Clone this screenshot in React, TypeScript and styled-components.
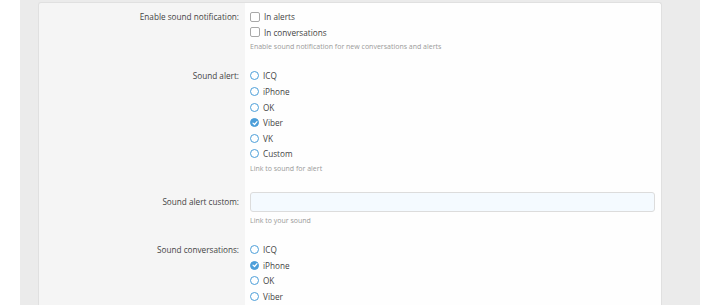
import styled, { createGlobalStyle } from 'styled-components'

const GlobalStyle = createGlobalStyle`
  html, body {
    margin: 0;
    padding: 0;
    background: #ffffff;
  }
  body {
    font-family: "Open Sans", "Noto Sans", sans-serif;
    color: #3c3c3c;
  }
`

const Page = styled.div`
  width: 680px;
  height: 305px;
  margin-left: 20px;
  padding: 2px 38px 0 18px;
  box-sizing: border-box;
  background: #ebebeb;
  overflow: hidden;
`

const Panel = styled.div`
  background: #fefefe;
  border: 1px solid #e0e0e0;
  border-bottom: none;
  border-radius: 3px 3px 0 0;
  height: 100%;
  overflow: hidden;
  background-image: linear-gradient(to right, #f5f5f5 206px, #fefefe 206px);
`

const Row = styled.div`
  display: grid;
  grid-template-columns: 206px 1fr;
`

const Label = styled.div<{ $offset?: number }>`
  padding: ${({ $offset }) => 6 + ($offset ?? 0)}px 6px 8px 0;
  text-align: right;
  font-size: 8.2px;
  line-height: 15.6px;
  color: #444;
`

const Field = styled.div<{ $bottom?: number }>`
  padding: 6px 6px ${({ $bottom }) => $bottom ?? 8}px 5px;
  display: flex;
  flex-direction: column;
`

const Option = styled.label`
  display: flex;
  align-items: center;
  gap: 4px;
  height: 15.6px;
  font-size: 8.2px;
  color: #444;
`

const Box = styled.span`
  width: 8px;
  height: 8px;
  border: 1px solid #a8a8a8;
  border-radius: 2px;
  background: #fff;
  flex: none;
`

const Radio = styled.span<{ $checked?: boolean }>`
  width: 7px;
  height: 7px;
  border: 1.5px solid #4c9ed9;
  border-radius: 50%;
  background: ${({ $checked }) => ($checked ? '#4c9ed9' : '#fff')};
  flex: none;
  display: flex;
  align-items: center;
  justify-content: center;
`

const Explain = styled.div`
  margin-top: 1px;
  font-size: 7px;
  line-height: 12px;
  color: #9a9a9a;
`

const Input = styled.div`
  margin: 3px 0 2px;
  height: 18px;
  border: 1px solid #dcdcdc;
  border-radius: 3px;
  background: #f4faff;
`

const Check = () => (
  <svg width="6" height="6" viewBox="0 0 6 6">
    <path d="M1 3.1 L2.5 4.5 L5 1.6" fill="none" stroke="#fff" strokeWidth="1.2" strokeLinecap="round" strokeLinejoin="round" />
  </svg>
)

const RadioList = ({ items, checked }: { items: string[]; checked?: string }) => (
  <>
    {items.map((item) => (
      <Option key={item}>
        <Radio $checked={item === checked}>{item === checked && <Check />}</Radio>
        {item}
      </Option>
    ))}
  </>
)

export default function App() {
  return (
    <>
      <GlobalStyle />
      <Page>
        <Panel>
          <Row>
            <Label>Enable sound notification:</Label>
            <Field $bottom={9}>
              <Option>
                <Box />
                In alerts
              </Option>
              <Option>
                <Box />
                In conversations
              </Option>
              <Explain>Enable sound notification for new conversations and alerts</Explain>
            </Field>
          </Row>
          <Row>
            <Label>Sound alert:</Label>
            <Field>
              <RadioList items={['ICQ', 'iPhone', 'OK', 'Viber', 'VK', 'Custom']} checked="Viber" />
              <Explain>Link to sound for alert</Explain>
            </Field>
          </Row>
          <Row>
            <Label $offset={5}>Sound alert custom:</Label>
            <Field $bottom={9}>
              <Input />
              <Explain>Link to your sound</Explain>
            </Field>
          </Row>
          <Row>
            <Label>Sound conversations:</Label>
            <Field>
              <RadioList items={['ICQ', 'iPhone', 'OK', 'Viber']} checked="iPhone" />
            </Field>
          </Row>
        </Panel>
      </Page>
    </>
  )
}
